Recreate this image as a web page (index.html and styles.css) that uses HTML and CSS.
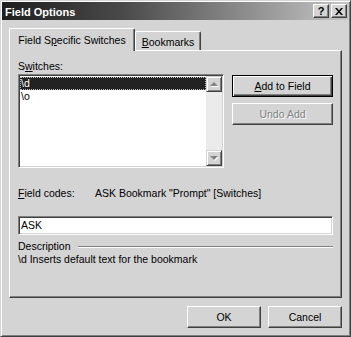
FILE: index.html
```html
<!DOCTYPE html>
<html>
<head>
	<meta charset="utf-8">
	<title>Field Options</title>
	<link rel="stylesheet" href="styles.css">
</head>
<body>
	<div class="window">
		<div class="titlebar">
			<span class="title">Field Options</span>
			<div class="title_btns">
				<span class="tbtn">?</span>
				<span class="tbtn">
					<svg width="8" height="7" viewBox="0 0 8 7"><path d="M0 0h2l2 2.5 2-2.5h2l-3 3.5 3 3.5h-2l-2-2.5-2 2.5h-2l3-3.5z" fill="#000"/></svg>
				</span>
			</div>
		</div>

		<div class="content">
			<div class="tabs">
				<div class="tab active">Field S<u>p</u>ecific Switches</div>
				<div class="tab"><u>B</u>ookmarks</div>
			</div>

			<div class="panel">
				<div class="label">S<u>w</u>itches:</div>
				<div class="switch_row">
					<div class="listbox">
						<ul class="items">
							<li class="selected">\d</li>
							<li>\o</li>
						</ul>
						<div class="scrollbar">
							<span class="sbtn"><i class="arrow up"></i></span>
							<span class="track"></span>
							<span class="sbtn"><i class="arrow down"></i></span>
						</div>
					</div>
					<div class="side_btns">
						<button class="btn default"><u>A</u>dd to Field</button>
						<button class="btn disabled">Undo Add</button>
					</div>
				</div>

				<div class="codes_row">
					<span class="codes_label"><u>F</u>ield codes:</span>
					<span>ASK Bookmark "Prompt" [Switches]</span>
				</div>
				<div class="textbox">ASK</div>

				<div class="group_head">
					<span>Description</span>
					<span class="rule"></span>
				</div>
				<div class="desc">\d Inserts default text for the bookmark</div>
			</div>

			<div class="footer">
				<button class="btn">OK</button>
				<button class="btn">Cancel</button>
			</div>
		</div>
	</div>
</body>
</html>
```

FILE: styles.css
```css
*{box-sizing: border-box;}
body{margin: 0; background: #d4d4d4; color: #000;
	font: 10.5px/13px "Liberation Sans", Arial, sans-serif;}
ul,li{list-style: none; margin: 0; padding: 0;}
u{text-decoration: underline; text-underline-offset: 1px;}

/* window frame */
.window{width: 351px; height: 337px; padding: 1px; background: #d4d4d4;
	border: 1px solid; border-color: #d4d4d4 #404040 #404040 #d4d4d4;
	box-shadow: inset 1px 1px #fff, inset -1px -1px #808080;
	display: flex; flex-direction: column;}

.titlebar{height: 18px; display: flex; align-items: center; padding: 0 2px 0 3px;
	background: linear-gradient(to right, #1e1e1e, #4a4a4a 35%, #c6c6c6);}
.title{color: #fff; font-weight: bold; font-size: 11px; line-height: 18px; padding-top: 1px;}
.title_btns{margin-left: auto; display: flex; gap: 2px;}
.tbtn{width: 16px; height: 14px; background: #d4d4d4; display: flex;
	align-items: center; justify-content: center; font-weight: bold; font-size: 11px;
	border: 1px solid; border-color: #fff #404040 #404040 #fff;
	box-shadow: inset -1px -1px #808080;}

.content{display: flex; flex-direction: column; padding: 8px 7px 0 7px;}

/* tabs */
.tabs{display: flex; align-items: flex-end; height: 23px; margin-bottom: -1px;
	position: relative; z-index: 1;}
.tab{height: 19px; margin-bottom: 1px; width: 66px; padding-top: 4px; text-align: center;
	background: #d4d4d4; border: 1px solid; border-bottom: none;
	border-color: #fff #404040 #404040 #fff; border-radius: 2px 2px 0 0;
	box-shadow: inset -1px 0 #808080;}
.tab.active{height: 23px; margin-bottom: 0; width: 126px; padding-top: 5px;}

.panel{height: 248px; padding: 9px 8px 0 8px; position: relative;
	border: 1px solid; border-color: #fff #404040 #404040 #fff;
	box-shadow: inset -1px -1px #808080;}

.label{height: 13px; margin-bottom: 1px;}

.switch_row{display: flex; gap: 8px;}
.listbox{width: 206px; height: 94px; display: flex; background: #fff;
	border: 1px solid; border-color: #808080 #fff #fff #808080;
	box-shadow: inset 1px 1px #404040, inset -1px -1px #d4d4d4; padding: 1px;}
.items{flex: 1; padding-top: 1px;}
.items li{height: 13px; padding-left: 1px;}
.items li.selected{background: #222; color: #fff;
	outline: 1px dotted #bbb; outline-offset: -1px;}

.scrollbar{width: 16px; display: flex; flex-direction: column;}
.track{flex: 1; background: #ebebeb;}
.sbtn{height: 16px; background: #d4d4d4; display: flex; align-items: center; justify-content: center;
	border: 1px solid; border-color: #d4d4d4 #404040 #404040 #d4d4d4;
	box-shadow: inset 1px 1px #fff, inset -1px -1px #808080;}
.arrow{width: 0; height: 0; border-left: 4px solid transparent; border-right: 4px solid transparent;
	filter: drop-shadow(1px 1px 0 #fff);}
.arrow.up{border-bottom: 4px solid #808080;}
.arrow.down{border-top: 4px solid #808080;}

.side_btns{display: flex; flex-direction: column; gap: 6px; padding-top: 1px;}
.btn{width: 101px; height: 22px; padding: 0; font: inherit; color: #000; background: #d4d4d4;
	border: 1px solid; border-color: #fff #404040 #404040 #fff;
	box-shadow: inset -1px -1px #808080;}
.btn.default{border-color: #000;
	box-shadow: inset 1px 1px #fff, inset -1px -1px #404040, inset -2px -2px #808080;}
.btn.disabled{color: #808080; text-shadow: 1px 1px #fff;}

.codes_row{margin-top: 19px; display: flex;}
.codes_label{width: 77px;}

.textbox{margin-top: 16px; height: 19px; padding: 2px 0 0 2px; background: #fff;
	border: 1px solid; border-color: #808080 #fff #fff #808080;
	box-shadow: inset 1px 1px #404040, inset -1px -1px #d4d4d4;}

.group_head{margin-top: 5px; display: flex; align-items: center;}
.rule{flex: 1; margin-left: 7px; height: 2px; border-top: 1px solid #808080;
	border-bottom: 1px solid #fff;}

.footer{display: flex; justify-content: flex-end; gap: 7px; margin-top: 8px;}
.footer .btn{width: 74px;}
```
